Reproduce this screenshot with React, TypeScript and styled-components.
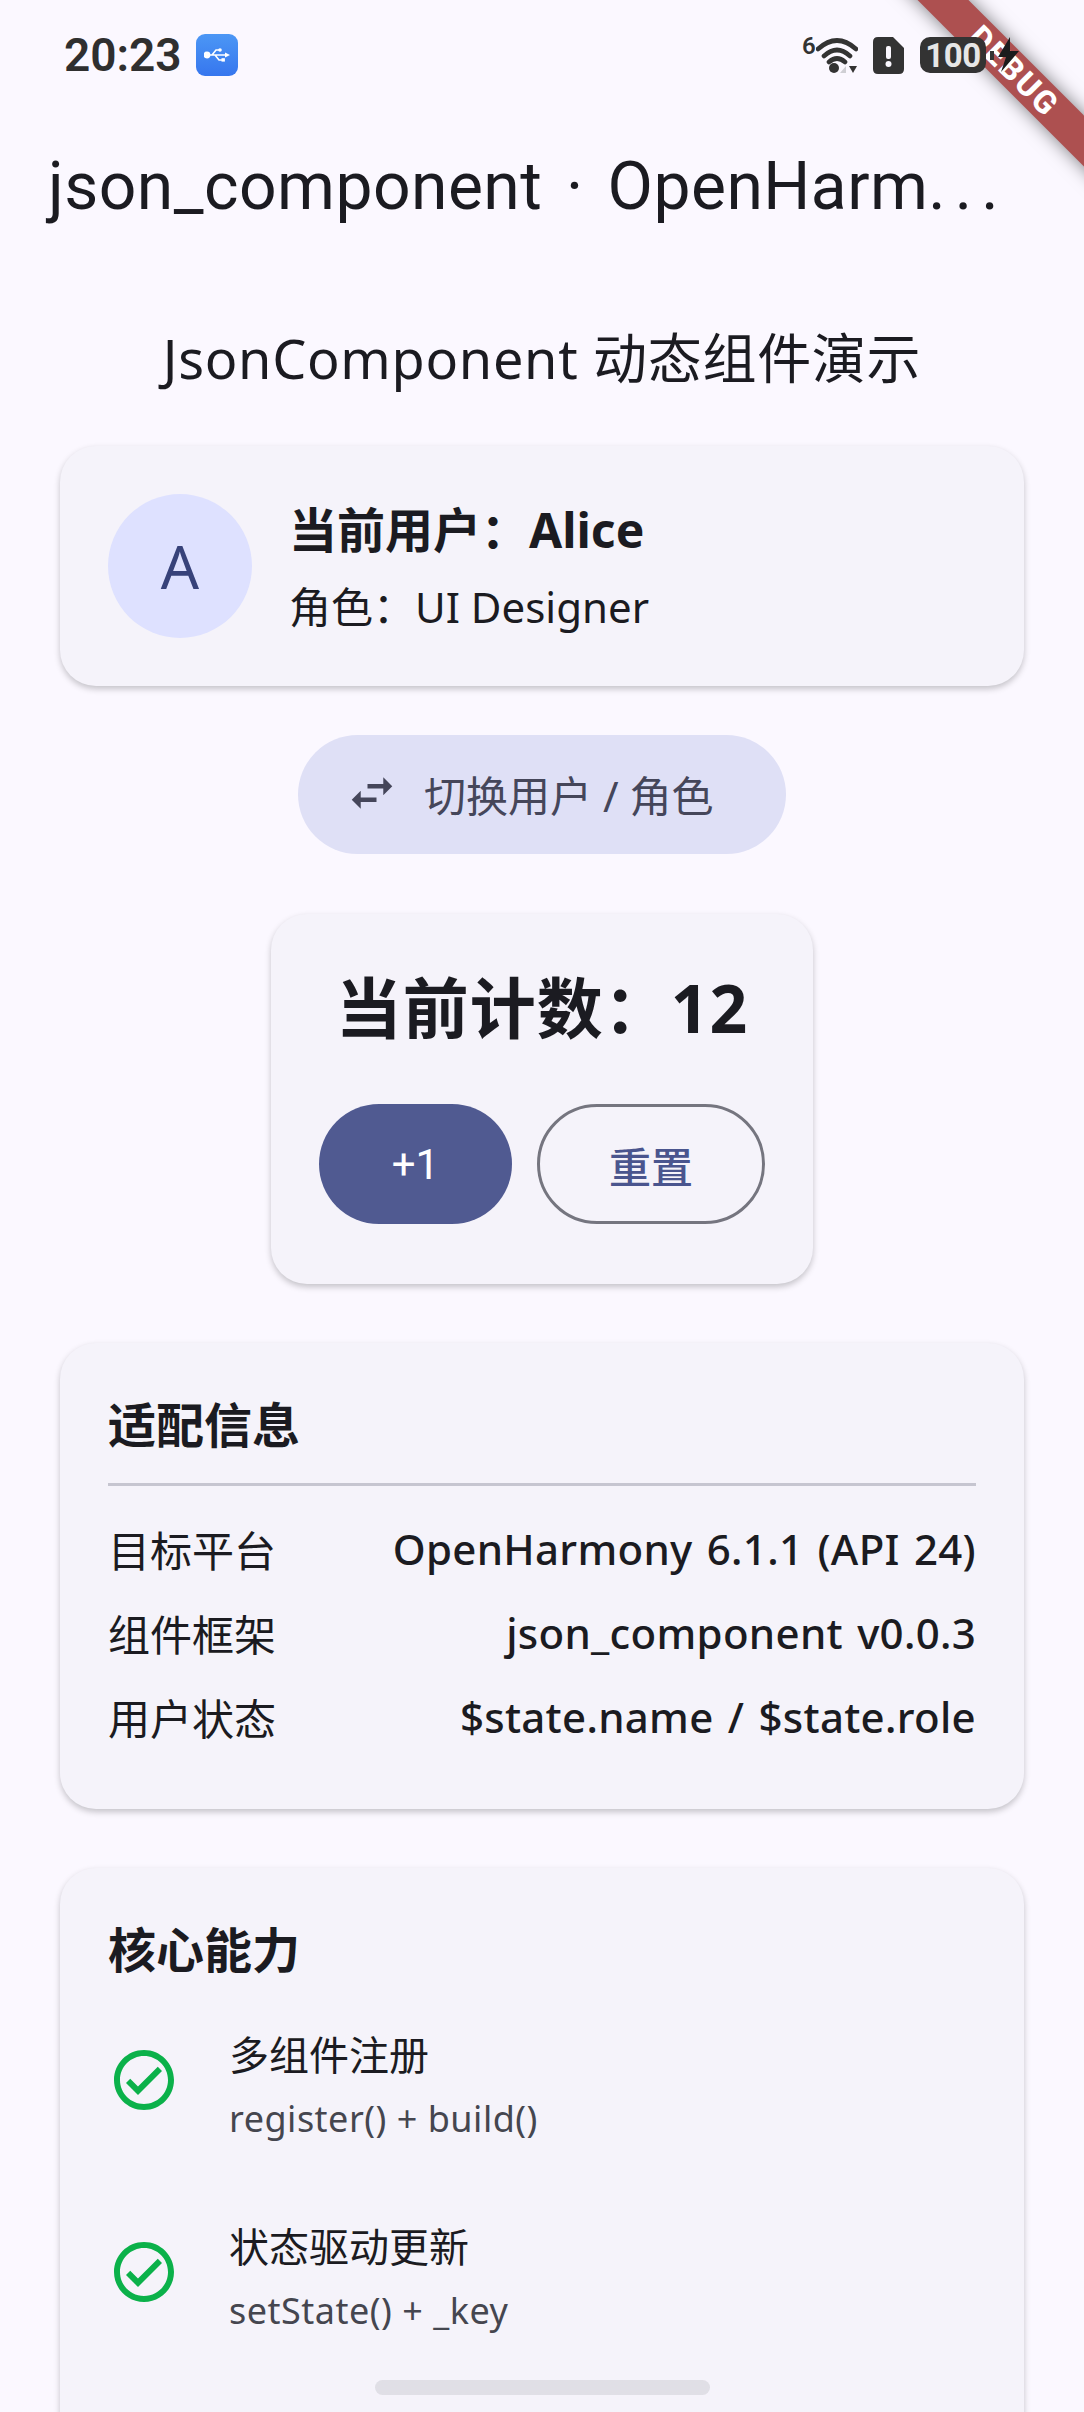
import { FC } from "react";
import styled, { createGlobalStyle } from "styled-components";

const GlobalStyle = createGlobalStyle`
  html, body {
    margin: 0;
    padding: 0;
    background: #fbf8ff;
  }
  * {
    box-sizing: border-box;
  }
`;

const Screen = styled.div`
  position: relative;
  width: 1084px;
  height: 2412px;
  overflow: hidden;
  background: #fbf8ff;
  color: #1b1b21;
  font-family: "Noto Sans", "Noto Sans CJK SC", sans-serif;
`;

const StatusBar = styled.div`
  position: relative;
  z-index: 3;
  height: 110px;
  padding: 0 64px;
  display: flex;
  align-items: center;
  justify-content: space-between;
  font-family: Roboto, sans-serif;
`;

const StatusLeft = styled.div`
  display: flex;
  align-items: center;
  gap: 14px;
`;

const Clock = styled.span`
  font-size: 46px;
  font-weight: 600;
  color: #2f2f2f;
`;

const UsbBadge = styled.div`
  width: 42px;
  height: 42px;
  border-radius: 9px;
  background: linear-gradient(#4c97f5, #3676ee);
  display: flex;
  align-items: center;
  justify-content: center;
`;

const StatusRight = styled.div`
  display: flex;
  align-items: center;
`;

const WifiGeneration = styled.span`
  width: 14px;
  margin-top: -18px;
  color: #333333;
  font-size: 24px;
  font-weight: 600;
  line-height: 24px;
`;

const AlertIcon = styled.svg`
  margin-left: 15px;
`;

const Battery = styled.div`
  width: 66px;
  height: 36px;
  margin-left: 16px;
  border-radius: 10px;
  background: #333333;
  color: #e6e6e6;
  font-size: 33px;
  font-weight: 700;
  line-height: 37px;
  letter-spacing: -0.5px;
  text-align: center;
`;

const DebugBanner = styled.div`
  position: absolute;
  z-index: 2;
  top: 53px;
  left: 864px;
  width: 300px;
  height: 36px;
  transform: rotate(45deg);
  background: #ad5050;
  box-shadow: 0 0 18px rgba(0, 0, 0, 0.5);
  color: #ffffff;
  font-family: Roboto, sans-serif;
  font-size: 32px;
  font-weight: 800;
  letter-spacing: 2px;
  line-height: 36px;
  text-align: center;
`;

const AppBar = styled.div`
  height: 152px;
  padding: 0 48px;
  display: flex;
  align-items: center;
  font-family: Roboto, sans-serif;
  font-size: 66px;
  font-weight: 400;
  letter-spacing: 0.45px;
  white-space: pre;
  word-spacing: 7px;
`;

const TitleDots = styled.span`
  letter-spacing: 9px;
`;

const Content = styled.main`
  padding: 0 60px;
  display: flex;
  flex-direction: column;
  align-items: center;
`;

const PageTitle = styled.h1`
  margin: 60px 0 52px;
  font-size: 54px;
  font-weight: 400;
  letter-spacing: 0.7px;
  line-height: 72px;
`;

const Card = styled.section`
  width: 100%;
  background: #f5f3fa;
  border-radius: 36px;
  box-shadow: 0 3px 6px rgba(0, 0, 0, 0.22);
`;

const UserCard = styled(Card)`
  height: 240px;
  padding: 0 48px;
  display: flex;
  align-items: center;
  gap: 37px;
`;

const Avatar = styled.div`
  width: 144px;
  height: 144px;
  border-radius: 50%;
  background: #dee1ff;
  color: #37427a;
  font-size: 60px;
  display: flex;
  align-items: center;
  justify-content: center;
`;

const UserInfo = styled.div`
  display: flex;
  flex-direction: column;
  gap: 16px;
`;

const UserName = styled.div`
  font-size: 48px;
  font-weight: 700;
  line-height: 66px;
`;

const UserRole = styled.div`
  font-size: 42px;
  line-height: 56px;
`;

const SwitchButton = styled.button`
  margin-top: 49px;
  width: 488px;
  height: 119px;
  padding: 0 0 3px 47px;
  border: 0;
  border-radius: 60px;
  background: #dfe0f6;
  color: #45465a;
  font-family: inherit;
  font-size: 42px;
  display: flex;
  align-items: center;
  gap: 25px;
`;

const CounterCard = styled(Card)`
  margin-top: 60px;
  width: 542px;
  height: 370px;
  padding: 48px;
  display: flex;
  flex-direction: column;
  align-items: center;
`;

const CounterValue = styled.div`
  font-size: 66px;
  font-weight: 700;
  letter-spacing: 1px;
  line-height: 90px;
  white-space: nowrap;
`;

const CounterButtons = styled.div`
  margin-top: 52px;
  display: flex;
  gap: 25px;
`;

const PrimaryButton = styled.button`
  width: 193px;
  height: 120px;
  border: 0;
  border-radius: 60px;
  background: #505a91;
  color: #ffffff;
  font-family: Roboto, sans-serif;
  font-size: 42px;
`;

const OutlineButton = styled.button`
  width: 228px;
  height: 120px;
  border: 3px solid #75757f;
  border-radius: 60px;
  background: transparent;
  color: #4a558e;
  font-family: inherit;
  font-size: 42px;
  font-weight: 500;
`;

const InfoCard = styled(Card)`
  margin-top: 59px;
  height: 466px;
  padding: 48px;
`;

const SectionTitle = styled.h2`
  margin: 2px 0 0;
  font-size: 48px;
  font-weight: 700;
  line-height: 64px;
`;

const Divider = styled.div`
  height: 3px;
  margin: 26px 0 20px;
  background: #c6c5d0;
`;

const InfoRow = styled.div`
  height: 84px;
  display: flex;
  align-items: center;
  justify-content: space-between;
  font-size: 42px;
`;

const InfoValue = styled.span`
  font-weight: 500;
  letter-spacing: 0.3px;
  word-spacing: 3px;
`;

const FeatureCard = styled(Card)`
  margin-top: 59px;
  height: 700px;
  flex-shrink: 0;
  padding: 48px;
`;

const FeatureList = styled.div`
  margin-top: 2px;
`;

const Feature = styled.div`
  height: 192px;
  display: flex;
  align-items: center;
  gap: 49px;
`;

const FeatureText = styled.div`
  margin-top: 12px;
  display: flex;
  flex-direction: column;
  gap: 13px;
`;

const FeatureName = styled.div`
  font-size: 40px;
  line-height: 52px;
`;

const FeatureCode = styled.div`
  color: #45464f;
  font-size: 36px;
  letter-spacing: 0.5px;
  line-height: 50px;
`;

const HomeIndicator = styled.div`
  position: absolute;
  z-index: 3;
  left: 375px;
  top: 2380px;
  width: 335px;
  height: 15px;
  border-radius: 8px;
  background: #e0dfe6;
`;

const CheckIcon: FC = () => (
  <svg width="72" height="72" viewBox="0 0 24 24" fill="#0bb14a">
    <path d="M12 2C6.48 2 2 6.48 2 12s4.48 10 10 10 10-4.48 10-10S17.52 2 12 2zm0 18c-4.41 0-8-3.59-8-8s3.59-8 8-8 8 3.59 8 8-3.59 8-8 8zm4.59-12.42L10 14.17l-2.59-2.58L6 13l4 4 8-8z" />
  </svg>
);

const App: FC = () => {
  return (
    <Screen>
      <GlobalStyle />
      <StatusBar>
        <StatusLeft>
          <Clock>20:23</Clock>
          <UsbBadge>
            <svg width="26" height="16" viewBox="0 0 26 16" fill="none" stroke="#ffffff" strokeWidth="1.6">
              <circle cx="3" cy="8" r="2.6" fill="#ffffff" />
              <path d="M3 8H22M8 8L12 3H15M11 8L15 13H18" />
              <circle cx="16" cy="3" r="1.8" fill="#ffffff" stroke="none" />
              <rect x="17.5" y="11.2" width="3.4" height="3.4" fill="#ffffff" stroke="none" />
              <path d="M21 5.5L26 8L21 10.5Z" fill="#ffffff" stroke="none" />
            </svg>
          </UsbBadge>
        </StatusLeft>
        <StatusRight>
          <WifiGeneration>6</WifiGeneration>
          <svg width="42" height="38" viewBox="13 0 42 38" fill="none">
            <path d="M15 13Q34 -4 53 13M21 20Q34 8 47 20M26 26Q34 19 42 26" stroke="#333333" strokeWidth="4.6" strokeLinecap="round" />
            <circle cx="31" cy="32" r="5" fill="#333333" />
            <path d="M43 37V30L37 37Z" fill="#cfcfd4" />
            <path d="M46 30H54L50 37Z" fill="#333333" />
          </svg>
          <AlertIcon width="31" height="37" viewBox="0 0 31 37">
            <path d="M5 0H20L31 11V32Q31 37 26 37H5Q0 37 0 32V5Q0 0 5 0Z" fill="#333333" />
            <rect x="13" y="9" width="5" height="13" rx="2" fill="#fbf8ff" />
            <circle cx="15.5" cy="27" r="3" fill="#fbf8ff" />
          </AlertIcon>
          <Battery>100</Battery>
          <svg width="34" height="36" viewBox="0 0 34 36">
            <rect x="4" y="14" width="4" height="9" fill="#333333" />
            <path d="M24 0L12 20H20L15 35L33 14H24Z" fill="#1c1c1c" />
          </svg>
        </StatusRight>
      </StatusBar>
      <DebugBanner>DEBUG</DebugBanner>
      <AppBar>
        json_component · OpenHarm<TitleDots>...</TitleDots>
      </AppBar>
      <Content>
        <PageTitle>JsonComponent 动态组件演示</PageTitle>
        <UserCard>
          <Avatar>A</Avatar>
          <UserInfo>
            <UserName>当前用户：Alice</UserName>
            <UserRole>角色：UI Designer</UserRole>
          </UserInfo>
        </UserCard>
        <SwitchButton>
          <svg width="54" height="54" viewBox="0 0 24 24" fill="#45465a">
            <path d="M6.99 11L3 15l3.99 4v-3H14v-2H6.99v-3zM21 9l-3.99-4v3H10v2h7.01v3L21 9z" />
          </svg>
          切换用户 / 角色
        </SwitchButton>
        <CounterCard>
          <CounterValue>当前计数：12</CounterValue>
          <CounterButtons>
            <PrimaryButton>+1</PrimaryButton>
            <OutlineButton>重置</OutlineButton>
          </CounterButtons>
        </CounterCard>
        <InfoCard>
          <SectionTitle>适配信息</SectionTitle>
          <Divider />
          <InfoRow>目标平台<InfoValue>OpenHarmony 6.1.1 (API 24)</InfoValue></InfoRow>
          <InfoRow>组件框架<InfoValue>json_component v0.0.3</InfoValue></InfoRow>
          <InfoRow>用户状态<InfoValue>$state.name / $state.role</InfoValue></InfoRow>
        </InfoCard>
        <FeatureCard>
          <SectionTitle>核心能力</SectionTitle>
          <FeatureList>
            <Feature>
              <CheckIcon />
              <FeatureText>
                <FeatureName>多组件注册</FeatureName>
                <FeatureCode>register() + build()</FeatureCode>
              </FeatureText>
            </Feature>
            <Feature>
              <CheckIcon />
              <FeatureText>
                <FeatureName>状态驱动更新</FeatureName>
                <FeatureCode>setState() + _key</FeatureCode>
              </FeatureText>
            </Feature>
          </FeatureList>
        </FeatureCard>
      </Content>
      <HomeIndicator />
    </Screen>
  );
};

export default App;
